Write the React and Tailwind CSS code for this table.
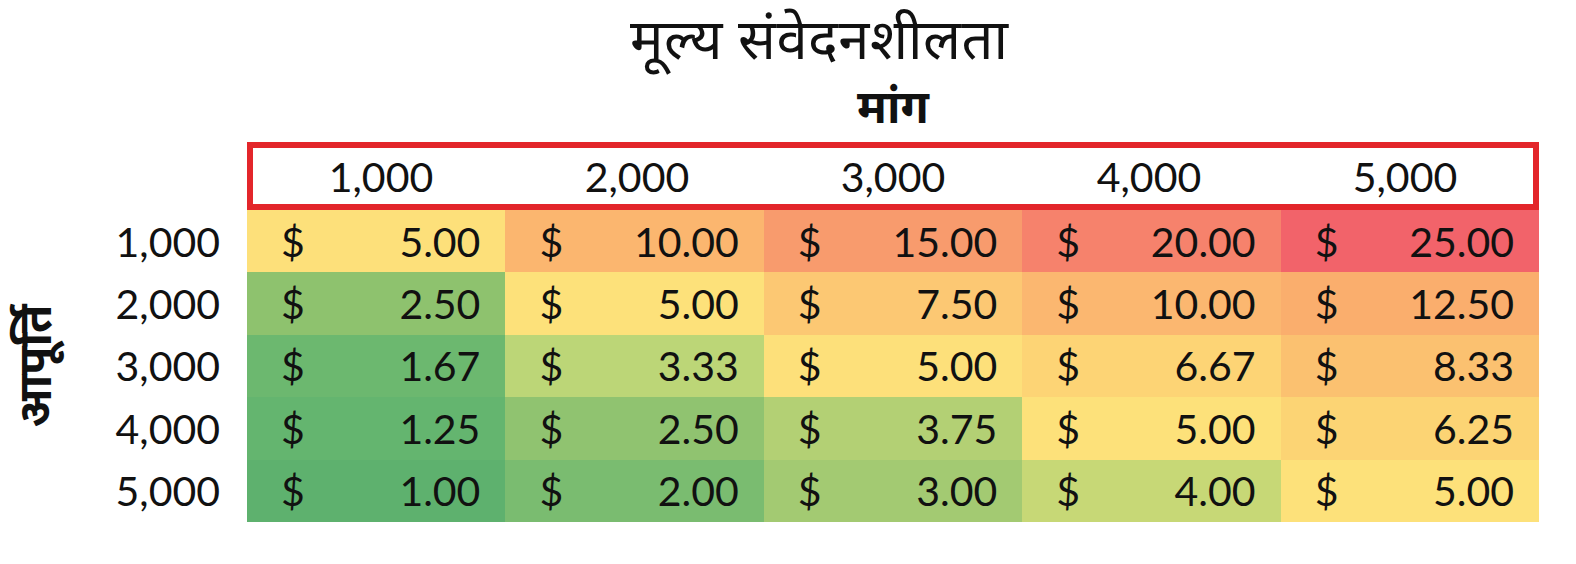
import React from 'react';

const cols = ['1,000', '2,000', '3,000', '4,000', '5,000'];

const rows = [
  {
    label: '1,000',
    cells: [
      ['5.00', 'bg-[#fde07a]'],
      ['10.00', 'bg-[#fbb66f]'],
      ['15.00', 'bg-[#f89b6d]'],
      ['20.00', 'bg-[#f6826c]'],
      ['25.00', 'bg-[#f2636a]'],
    ],
  },
  {
    label: '2,000',
    cells: [
      ['2.50', 'bg-[#8ec26e]'],
      ['5.00', 'bg-[#fde17a]'],
      ['7.50', 'bg-[#fcc873]'],
      ['10.00', 'bg-[#fbb770]'],
      ['12.50', 'bg-[#faae6d]'],
    ],
  },
  {
    label: '3,000',
    cells: [
      ['1.67', 'bg-[#6cb86f]'],
      ['3.33', 'bg-[#bcd677]'],
      ['5.00', 'bg-[#fde07a]'],
      ['6.67', 'bg-[#fdd475]'],
      ['8.33', 'bg-[#fbc170]'],
    ],
  },
  {
    label: '4,000',
    cells: [
      ['1.25', 'bg-[#64b56f]'],
      ['2.50', 'bg-[#90c370]'],
      ['3.75', 'bg-[#b3d074]'],
      ['5.00', 'bg-[#fde17a]'],
      ['6.25', 'bg-[#fcd474]'],
    ],
  },
  {
    label: '5,000',
    cells: [
      ['1.00', 'bg-[#5eb16e]'],
      ['2.00', 'bg-[#7abc70]'],
      ['3.00', 'bg-[#a3ca72]'],
      ['4.00', 'bg-[#c7d876]'],
      ['5.00', 'bg-[#fde17a]'],
    ],
  },
];

const num = "font-['Lato','Open_Sans',sans-serif] text-[41px] leading-none text-[#111]";
const deva = "font-['Noto_Sans_Devanagari','Noto_Sans','Lohit_Devanagari',sans-serif] text-[#111]";

export default function App() {
  return (
    <div className="w-[1576px] h-[564px] bg-white overflow-hidden">
      {/* title */}
      <div className={`${deva} pl-[630px] pt-[11px] text-[56px] leading-[70px] h-[82px] tracking-[0.5px]`}>
        मूल्य संवेदनशीलता
      </div>

      <div className="flex">
        {/* left side: axis label + row labels */}
        <div className="w-[247px] flex flex-col">
          <div className="h-[128px]" />
          <div className="flex h-[312px]">
            <div className="w-[80px] flex items-center justify-center">
              <span className={`${deva} font-bold text-[46px] leading-none whitespace-nowrap -rotate-90 block`}>
                आपूर्ति
              </span>
            </div>
            <div className="flex-1 flex flex-col items-end pr-[27px]">
              {rows.map((r) => (
                <div key={r.label} className={`${num} h-[62.4px] flex items-center`}>
                  {r.label}
                </div>
              ))}
            </div>
          </div>
        </div>

        {/* table */}
        <div className="w-[1292px] flex flex-col">
          <div className={`${deva} font-bold text-[46px] leading-none h-[60px] flex items-center justify-center`}>
            मांग
          </div>
          <div className="h-[68px] border-[6px] border-[#e3262a] flex">
            {cols.map((c) => (
              <div key={c} className={`${num} flex-1 flex items-center justify-center`}>
                {c}
              </div>
            ))}
          </div>
          {rows.map((r) => (
            <div key={r.label} className="flex h-[62.4px]">
              {r.cells.map(([v, bg], i) => (
                <div
                  key={i}
                  className={`${num} ${bg} flex-1 flex items-center justify-between pl-[34px] pr-[25px]`}
                >
                  <span>$</span>
                  <span>{v}</span>
                </div>
              ))}
            </div>
          ))}
        </div>
      </div>
    </div>
  );
}
